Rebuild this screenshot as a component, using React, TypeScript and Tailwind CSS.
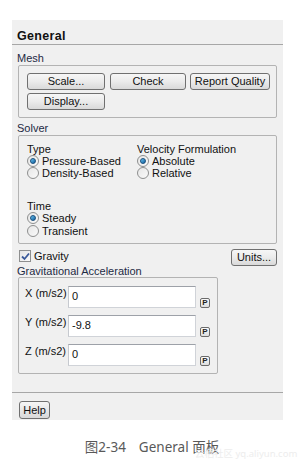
import React from 'react';

// Fluent-style "General" task panel (Windows 7 look) with figure caption.

const UI_FONT = { fontFamily: '"Liberation Sans", Arial, sans-serif' };

function Btn({ label, w, className = '' }: { label: string; w: string; className?: string }) {
  return (
    <div
      className={`${w} h-[17px] shrink-0 flex items-center justify-center rounded-[3px] border border-[#707070] bg-gradient-to-b from-[#f6f6f6] via-[#ebebeb] to-[#d9d9d9] text-[11px] leading-none text-[#111] ${className}`}
    >
      {label}
    </div>
  );
}

function Radio({ label, on }: { label: string; on?: boolean }) {
  return (
    <div className="h-[12px] flex items-center gap-[3px] text-[11px] leading-none text-[#111]">
      <span className="w-[12px] h-[12px] rounded-full border border-[#8e8f8f] bg-gradient-to-br from-[#e6e6e6] to-[#fafafa] flex items-center justify-center">
        {on && <span className="w-[6px] h-[6px] rounded-full bg-gradient-to-br from-[#6ac4f0] to-[#0b5f9e] border border-[#1a4f7d]" />}
      </span>
      <span>{label}</span>
    </div>
  );
}

function VecRow({ label, value }: { label: string; value: string }) {
  return (
    <div className="flex items-start">
      <div className="w-[43px] pt-[1px] text-[11px] leading-[13px] text-[#111]">{label}</div>
      <div className="w-[128px] h-[22px] bg-white border border-[#d0d3d8] border-t-[#9da1a8] border-l-[#c6c9cf] pl-[3px] pt-[3px] text-[11px] leading-[13px] text-[#111]">
        {value}
      </div>
      <div className="ml-[4px] mt-[12px] w-[10px] h-[10px] rounded-[2px] border border-[#6b6b6b] bg-gradient-to-b from-[#fafafa] to-[#dedede] flex items-center justify-center text-[8px] font-bold leading-none text-[#222]">
        P
      </div>
    </div>
  );
}

export default function App() {
  return (
    <div className="relative w-[304px] h-[470px] bg-white pt-[20px]" style={UI_FONT}>
      <div className="ml-[12px] w-[271px] h-[400px] bg-[#f0f0f0] flex flex-col">
        <div className="h-[25px] pt-[9px] pl-[5px] border-b border-[#a7a7a7] text-[12.5px] font-bold leading-[14px] tracking-[0.3px] text-[#111]">
          General
        </div>

        <div className="px-[6px] flex flex-col">
          <div className="mt-[7px] h-[13px] ml-[-1px] text-[11px] leading-[13px] text-[#1d2a44]">Mesh</div>
          <div className="h-[53px] border border-[#b3b3b3] rounded-[2px] pt-[7px] pl-[8px]">
            <div className="flex">
              <Btn label="Scale..." w="w-[78px]" />
              <Btn label="Check" w="w-[76px]" className="ml-[5px]" />
              <Btn label="Report Quality" w="w-[80px]" className="ml-[4px]" />
            </div>
            <div className="flex mt-[3px]">
              <Btn label="Display..." w="w-[78px]" />
            </div>
          </div>

          <div className="mt-[4px] h-[13px] ml-[-1px] text-[11px] leading-[13px] text-[#1d2a44]">Solver</div>
          <div className="h-[109px] border border-[#b3b3b3] rounded-[2px] pt-[7px] pl-[8px]">
            <div className="flex">
              <div className="w-[110px] flex flex-col">
                <div className="h-[12px] text-[11px] leading-[12px] text-[#111]">Type</div>
                <Radio label="Pressure-Based" on />
                <Radio label="Density-Based" />
              </div>
              <div className="flex flex-col">
                <div className="h-[12px] text-[11px] leading-[12px] text-[#111]">Velocity Formulation</div>
                <Radio label="Absolute" on />
                <Radio label="Relative" />
              </div>
            </div>
            <div className="mt-[21px] flex flex-col">
              <div className="h-[12px] text-[11px] leading-[12px] text-[#111]">Time</div>
              <Radio label="Steady" on />
              <div className="mt-[1px]">
                <Radio label="Transient" />
              </div>
            </div>
          </div>

          <div className="mt-[5px] h-[17px] flex justify-between items-start">
            <div className="mt-[1px] ml-[1px] flex items-center gap-[3px] text-[11px] leading-none text-[#111]">
              <span className="w-[12px] h-[12px] border border-[#8e8f8f] bg-gradient-to-br from-[#e4e4e4] to-[#fbfbfb] flex items-center justify-center">
                <svg width="9" height="9" viewBox="0 0 9 9">
                  <path d="M1 4.5 L3.5 7 L8 1.5" fill="none" stroke="#3b5a9a" strokeWidth="1.8" />
                </svg>
              </span>
              <span>Gravity</span>
            </div>
            <Btn label="Units..." w="w-[46px]" />
          </div>

          <div className="mt-[-1px] h-[12px] text-[11px] leading-[12px] ml-[-1px] text-[#1d2a44]">Gravitational Acceleration</div>
          <div className="w-[200px] h-[97px] border border-[#b3b3b3] rounded-[2px] pt-[8px] pl-[6px] flex flex-col gap-[7px]">
            <VecRow label="X (m/s2)" value="0" />
            <VecRow label="Y (m/s2)" value="-9.8" />
            <VecRow label="Z (m/s2)" value="0" />
          </div>
        </div>

        <div className="mt-auto h-[28px] border-t border-[#a7a7a7] pt-[8px] pl-[7px]">
          <div className="w-[31px] h-[18px] flex items-center justify-center rounded-[3px] border border-[#707070] bg-gradient-to-b from-[#f6f6f6] to-[#d9d9d9] text-[11px] leading-none text-[#111]">
            Help
          </div>
        </div>
      </div>

      <div
        className="mt-[18px] flex justify-center text-[13.5px] leading-[18px] text-[#595959]"
        style={{ fontFamily: '"Noto Sans", "Noto Sans CJK SC", sans-serif' }}
      >
        <span>图2-34</span>
        <span className="ml-[13px]">General 面板</span>
      </div>
      <div
        className="absolute left-[195px] top-[448px] whitespace-nowrap text-[9.5px] leading-[12px] text-[#ededed]"
        style={{ fontFamily: '"Noto Sans", "Noto Sans CJK SC", sans-serif' }}
      >
        云栖社区 yq.aliyun.com
      </div>
    </div>
  );
}
